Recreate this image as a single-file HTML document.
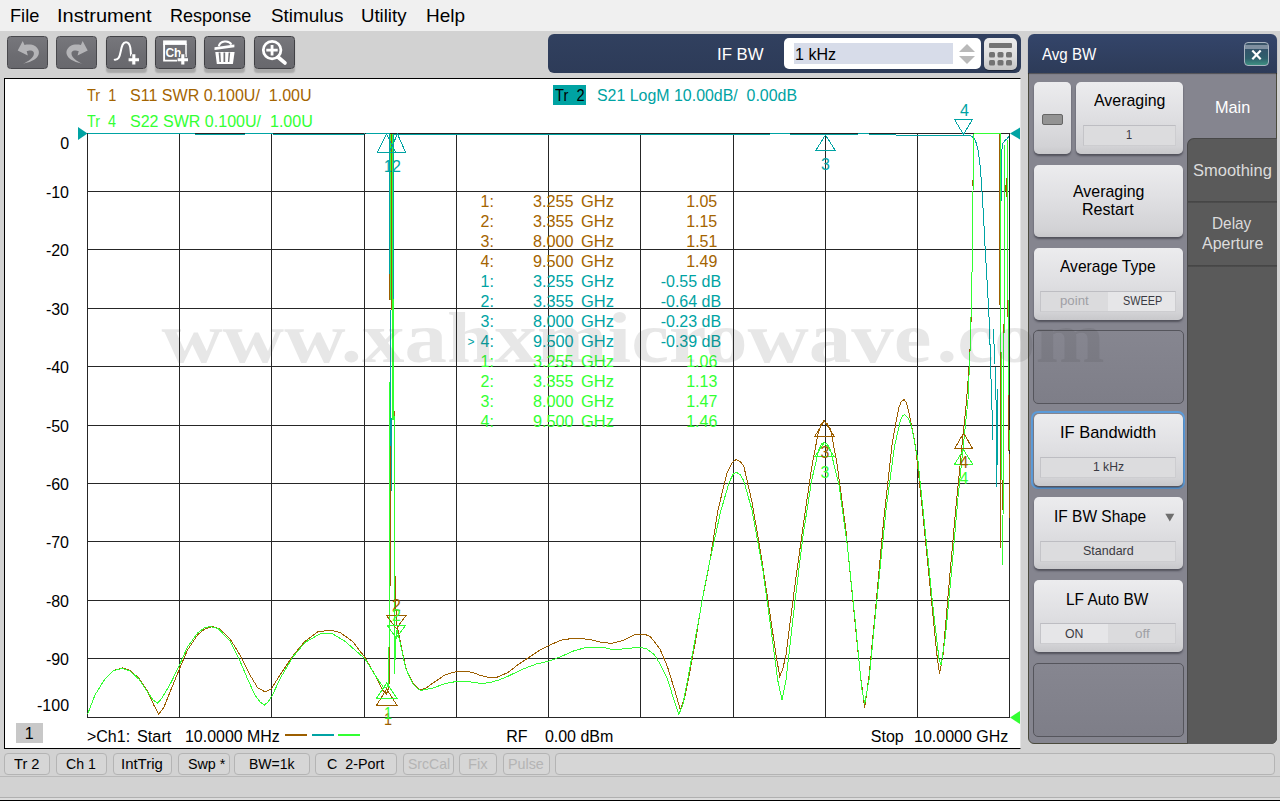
<!DOCTYPE html>
<html><head><meta charset="utf-8"><title>Network Analyzer</title>
<style>
html,body{margin:0;padding:0;}
body{width:1280px;height:801px;overflow:hidden;background:#d2d2d2;font-family:"Liberation Sans",sans-serif;position:relative;}
.abs{position:absolute;}
.t{position:absolute;white-space:pre;line-height:1;}
#menubar{left:0;top:0;width:1280px;height:31px;background:#f0f0f0;}
.tb{position:absolute;top:36px;width:39px;height:31px;border:1px solid #404044;border-radius:3.5px;
 background:linear-gradient(#77777c,#6c6c71 60%,#68686d);box-shadow:0 3.5px 1.5px rgba(0,0,0,0.2);}
.tb.dis{box-shadow:none;border-color:#48484c;}
.tb svg{position:absolute;left:-1px;top:-1px;}
.sk{position:absolute;left:1034px;width:149px;height:72px;border-radius:5px;
 background:linear-gradient(#ececee,#e0e0e3 45%,#d2d2d5 90%,#c8c8cb);box-shadow:0 2px 2px rgba(40,40,50,0.55);}
.slot{position:absolute;left:1033px;width:149px;height:72px;border-radius:5px;border:1px solid #55555c;
 background:linear-gradient(#868690,#7e7e88);}
.vb{position:absolute;left:6px;width:136px;height:20px;background:#dcdcde;border:1px solid #cfcfd2;border-top-color:#c4c4c8;box-sizing:border-box;
 font-size:12px;color:#3c3c44;text-align:center;line-height:19px;}
.sb{position:absolute;top:753px;height:20px;border:1px solid #b4b4b4;border-radius:4px;background:#d6d6d6;}
</style></head><body>
<div id="menubar" class="abs"></div>
<div class="t" style="left:9.51px;top:6.00px;font-size:19px;color:#000;transform-origin:0 0;transform:scaleX(0.9570);">File</div>
<div class="t" style="left:56.65px;top:6.00px;font-size:19px;color:#000;transform-origin:0 0;transform:scaleX(1.0527);">Instrument</div>
<div class="t" style="left:170.12px;top:6.00px;font-size:19px;color:#000;transform-origin:0 0;transform:scaleX(0.9489);">Response</div>
<div class="t" style="left:270.54px;top:6.00px;font-size:19px;color:#000;transform-origin:0 0;transform:scaleX(0.9943);">Stimulus</div>
<div class="t" style="left:361.36px;top:6.00px;font-size:19px;color:#000;transform-origin:0 0;transform:scaleX(0.9791);">Utility</div>
<div class="t" style="left:426.14px;top:6.00px;font-size:19px;color:#000;transform-origin:0 0;transform:scaleX(0.9995);">Help</div>
<div class="tb dis" style="left:7px;"><svg width="41" height="33" viewBox="0 0 41 33"><path d="M10.7 14.4 L15.75 5 L17.5 8.9 C20.5 8.4 25 8 28 10 C31 12 32.6 15 31.6 18.5 C30.5 22.2 26 25.6 16.1 27.7 C22 25 26.3 22 26.9 18 C27.3 15.5 25.5 14.3 23.6 14.4 C22 14.5 20.5 14.8 19.7 15.1 L20.8 19.4 Z" fill="#b4b4b7"/></svg></div>
<div class="tb dis" style="left:56.4px;"><svg width="41" height="33" viewBox="0 0 41 33"><g transform="translate(42.4,0) scale(-1,1)"><path d="M10.7 14.4 L15.75 5 L17.5 8.9 C20.5 8.4 25 8 28 10 C31 12 32.6 15 31.6 18.5 C30.5 22.2 26 25.6 16.1 27.7 C22 25 26.3 22 26.9 18 C27.3 15.5 25.5 14.3 23.6 14.4 C22 14.5 20.5 14.8 19.7 15.1 L20.8 19.4 Z" fill="#b4b4b7"/></g></svg></div>
<div class="tb" style="left:105.8px;"><svg width="41" height="33" viewBox="0 0 41 33"><path d="M8.7 23.7 C12.6 24 13.6 21 14.7 15.5 C15.8 9.5 16.8 6.2 20 6.2 C23 6.2 23.8 9 24.3 11.6 C24.7 14.5 24.8 17 25.1 19.5" fill="none" stroke="#fff" stroke-width="2" stroke-linecap="round"/><path d="M22.6 23.8h10.4M27.8 18.3v10.2" stroke="#727276" stroke-width="5.4"/><path d="M22.6 23.8h10.4M27.8 18.3v10.2" stroke="#fff" stroke-width="3.1"/></svg></div>
<div class="tb" style="left:155.1px;"><svg width="41" height="33" viewBox="0 0 41 33"><rect x="8.1" y="4.4" width="23.6" height="4.5" fill="#fff"/><path d="M9.1 8v16.6h13" fill="none" stroke="#fff" stroke-width="1.9"/><path d="M31 8v15" fill="none" stroke="#fff" stroke-width="1.5"/><text x="10.4" y="21" font-family="Liberation Sans, sans-serif" font-weight="bold" font-size="13" fill="#fff" textLength="16" lengthAdjust="spacingAndGlyphs">Ch</text><path d="M22.6 23.8h10.4M27.8 18.3v10.2" stroke="#727276" stroke-width="5.4"/><path d="M22.6 23.8h10.4M27.8 18.3v10.2" stroke="#fff" stroke-width="3.1"/></svg></div>
<div class="tb" style="left:204.4px;"><svg width="41" height="33" viewBox="0 0 41 33"><path d="M10.5 11.2 L30.4 8.5 L30.4 11.3 L10.5 13.9 Z" fill="#fff"/><path d="M14.8 10.4 C15.8 4.6 25 3.8 27.4 8.6" fill="none" stroke="#fff" stroke-width="2.1"/><path d="M11.3 15.9 L30.6 15.9 L28.9 28 L12.8 28 Z" fill="#fff"/><path d="M14.6 16.6 L16.4 16.6 L16.9 26.1 L15.5 26.1 Z M19.5 16.6 L21.2 16.6 L21.2 26.1 L19.5 26.1 Z M24.6 16.6 L26.2 16.6 L25.3 26.1 L23.9 26.1 Z" fill="#727276"/></svg></div>
<div class="tb" style="left:253.8px;"><svg width="41" height="33" viewBox="0 0 41 33"><circle cx="18.1" cy="14.1" r="8.8" fill="none" stroke="#fff" stroke-width="2.8"/><path d="M24.2 21.2 L30.9 26.9" stroke="#fff" stroke-width="3.8" stroke-linecap="round"/><path d="M12.3 14.1h11.4M18.05 8.9v10.5" stroke="#fff" stroke-width="2.8"/></svg></div>
<div class="abs" style="left:548px;top:34px;width:473px;height:39px;border-radius:6px;background:linear-gradient(#31405f,#2d3b58);"></div>
<div class="t" style="left:717.45px;top:46.00px;font-size:17px;color:#fff;transform-origin:0 0;transform:scaleX(0.9871);">IF BW</div>
<div class="abs" style="left:784px;top:38px;width:197px;height:31px;border-radius:5px;background:#fff;"></div>
<div class="abs" style="left:794px;top:43px;width:159px;height:21px;background:#d7dce9;"></div>
<div class="t" style="left:794.78px;top:46.00px;font-size:17px;color:#000;transform-origin:0 0;transform:scaleX(0.9440);">1 kHz</div>
<svg class="abs" style="left:957px;top:42px" width="20" height="24" viewBox="0 0 20 24"><path d="M2 10 L10 2 L18 10 Z" fill="#b9b9b9"/><path d="M2 14 L10 22 L18 14 Z" fill="#b9b9b9"/></svg>
<div class="abs" style="left:984px;top:38px;width:33px;height:32px;border-radius:5px;background:linear-gradient(#ededed,#dcdcdc 60%,#c4c4c4);box-shadow:0 1px 1px rgba(0,0,0,0.4);"></div>
<svg class="abs" style="left:984px;top:38px" width="33" height="32" viewBox="0 0 33 32"><rect x="5" y="5" width="23" height="5" rx="1" fill="#737373"/><rect x="5.0" y="14" width="6" height="5.5" rx="1.5" fill="#737373"/><rect x="13.5" y="14" width="6" height="5.5" rx="1.5" fill="#737373"/><rect x="22.0" y="14" width="6" height="5.5" rx="1.5" fill="#737373"/><rect x="5.0" y="22" width="6" height="5.5" rx="1.5" fill="#737373"/><rect x="13.5" y="22" width="6" height="5.5" rx="1.5" fill="#737373"/><rect x="22.0" y="22" width="6" height="5.5" rx="1.5" fill="#737373"/></svg>
<div class="abs" style="left:4px;top:78px;width:1015px;height:669px;background:#fff;border-left:1px solid #000;border-top:1px solid #000;border-bottom:1px solid #000;border-right:1px solid #e4e4e4;"></div>
<svg class="abs" style="left:0;top:0" width="1280" height="801" viewBox="0 0 1280 801" shape-rendering="crispEdges">
<path d="M87.5 133 V718 M179.5 133 V718 M271.5 133 V718 M364.5 133 V718 M456.5 133 V718 M548.5 133 V718 M640.5 133 V718 M733.5 133 V718 M825.5 133 V718 M917.5 133 V718 M1009.5 133 V718 M87 133.5 H1010 M87 191.5 H1010 M87 249.5 H1010 M87 308.5 H1010 M87 366.5 H1010 M87 425.5 H1010 M87 483.5 H1010 M87 541.5 H1010 M87 600.5 H1010 M87 658.5 H1010 M87 717.5 H1010" stroke="#262626" stroke-width="1" fill="none"/>
<polyline points="87.5,714.5 95.0,695.0 105.0,678.8 113.8,670.5 122.5,668.0 130.0,670.5 138.8,678.0 147.5,691.3 153.8,705.0 158.8,714.3 163.8,707.5 171.3,688.8 179.5,668.8 187.5,650.0 197.5,635.0 205.0,628.8 212.5,626.5 220.0,628.8 230.0,638.8 240.0,655.0 250.0,675.0 257.5,687.5 265.0,691.8 271.3,688.8 280.0,675.0 292.5,656.3 305.0,641.3 317.5,632.0 330.0,630.0 340.0,632.5 352.5,641.3 365.0,657.5 375.0,675.0 382.5,690.0 386.5,694.0 388.5,688.0 389.1,683.0 389.1,646.0" fill="none" stroke="#9c5e00" stroke-width="1" />
<polyline points="395.5,576.0 395.6,600.0 396.4,622.0 397.4,627.5 400.0,640.0 405.7,667.8 412.8,683.0 418.0,688.5 421.0,690.0 426.0,688.0 433.0,683.0 444.8,675.0 456.7,671.4 466.0,671.0 475.6,673.3 480.0,675.3 487.5,677.2 497.0,677.2 508.0,672.5 517.5,665.0 528.8,657.5 540.0,650.0 551.3,644.4 562.5,639.7 575.6,638.2 588.8,639.3 600.0,642.0 611.3,643.4 622.5,640.6 635.6,634.4 645.0,634.3 650.6,636.9 660.0,649.0 667.5,666.9 675.0,691.3 680.3,710.0 684.4,698.8 690.0,670.6 695.6,640.6 701.3,605.0 709.8,561.3 718.0,510.0 726.7,474.0 732.0,463.0 736.0,459.4 740.0,461.5 743.7,465.8 752.0,502.0 760.7,552.8 771.0,620.7 776.0,655.0 779.8,676.7 783.0,668.0 786.0,654.7 794.7,586.8 803.0,527.0 811.6,468.0 818.0,434.0 821.0,424.5 823.5,421.0 827.0,423.5 830.7,429.7 837.0,463.7 845.6,527.3 854.0,612.0 860.5,676.0 864.7,707.7 869.0,676.0 875.3,612.0 883.8,518.8 892.3,442.4 898.6,408.5 901.0,402.0 904.0,399.5 906.5,403.0 909.0,412.7 915.6,446.7 922.0,506.0 930.5,591.0 936.9,654.7 939.5,674.0 943.0,654.7 949.6,578.0 956.0,506.0 962.3,442.4 966.6,400.0 969.2,365.0 970.5,340.0 972.5,250.0 973.5,134.0" fill="none" stroke="#9c5e00" stroke-width="1" />
<polyline points="999.6,134.0 999.8,305.0" fill="none" stroke="#9c5e00" stroke-width="1" />
<polyline points="1008.6,395.0 1008.6,451.0" fill="none" stroke="#9c5e00" stroke-width="1" />
<polyline points="1009.4,454.0 1009.4,518.0" fill="none" stroke="#9c5e00" stroke-width="1" />
<polyline points="1005.2,185.0 1005.2,191.0" fill="none" stroke="#9c5e00" stroke-width="1" />
<polyline points="1006.6,178.0 1006.6,197.0" fill="none" stroke="#9c5e00" stroke-width="1" />
<polyline points="1000.4,340.0 1000.4,548.0" fill="none" stroke="#9c5e00" stroke-width="1" />
<polyline points="1007.6,276.0 1008.0,317.0" fill="none" stroke="#9c5e00" stroke-width="1" />
<polyline points="1003.4,324.0 1003.4,340.0" fill="none" stroke="#9c5e00" stroke-width="1" />
<polyline points="1002.4,480.0 1002.4,510.0" fill="none" stroke="#9c5e00" stroke-width="1" />
<polyline points="972.5,180.0 972.5,186.0" fill="none" stroke="#9c5e00" stroke-width="1" />
<polyline points="972.5,259.0 972.5,267.0" fill="none" stroke="#9c5e00" stroke-width="1" />
<polyline points="971.5,313.0 971.5,322.0" fill="none" stroke="#9c5e00" stroke-width="1" />
<polyline points="391.5,134.0 391.5,310.0" fill="none" stroke="#9c5e00" stroke-width="1" />
<polyline points="390.5,446.0 390.5,586.0" fill="none" stroke="#9c5e00" stroke-width="1" />
<polyline points="389.6,274.0 389.6,300.0" fill="none" stroke="#9c5e00" stroke-width="1" />
<polyline points="394.5,411.0 394.5,416.0" fill="none" stroke="#9c5e00" stroke-width="1" />
<polyline points="88.0,133.0 194.0,133.0 195.0,134.0 245.0,134.0 246.0,133.0 272.0,133.0 273.0,134.0 364.0,134.0 365.0,133.0 389.5,133.6 389.5,274.0" fill="none" stroke="#00a3a3" stroke-width="1" />
<polyline points="393.4,300.0 393.4,134.0 770.0,134.0 771.0,133.0 789.0,133.0 790.0,134.0 858.0,134.0 859.0,133.0 868.0,133.0 869.0,134.0 895.0,134.0 896.0,135.0 955.0,135.0 965.0,135.3 971.0,136.0 974.0,138.0 976.0,142.5 978.0,150.0 979.5,160.0 980.7,172.5 982.0,192.0 983.3,212.0 985.0,246.0 987.2,282.7 989.3,322.0 990.5,360.0 991.6,400.0 992.4,420.0 993.0,440.0" fill="none" stroke="#00a3a3" stroke-width="1" />
<polyline points="1001.6,201.0 1001.6,160.0 1002.0,149.0 1003.0,143.0 1005.0,140.5 1007.0,139.0 1009.0,136.0" fill="none" stroke="#00a3a3" stroke-width="1" />
<polyline points="993.6,329.0 994.2,350.0 995.0,364.0 995.2,400.0" fill="none" stroke="#00a3a3" stroke-width="1" />
<polyline points="996.0,400.0 996.0,487.0" fill="none" stroke="#00a3a3" stroke-width="1" />
<polyline points="997.6,389.0 997.6,465.0" fill="none" stroke="#00a3a3" stroke-width="1" />
<polyline points="996.8,430.0 996.8,465.0" fill="none" stroke="#00a3a3" stroke-width="1" />
<polyline points="390.5,310.0 390.5,418.0" fill="none" stroke="#00a3a3" stroke-width="1" />
<polyline points="390.5,418.0 390.5,446.0" fill="none" stroke="#00a3a3" stroke-width="1" />
<polyline points="391.4,418.0 391.4,491.0" fill="none" stroke="#00a3a3" stroke-width="1" />
<polyline points="87.5,714.5 95.0,695.0 105.0,678.8 113.8,670.5 122.5,668.5 130.0,671.0 138.8,679.0 147.5,692.0 153.0,700.0 157.5,703.3 162.0,698.0 171.3,682.0 179.5,665.0 187.5,647.0 197.5,633.0 204.0,628.0 210.0,626.5 218.0,628.5 230.0,641.0 240.0,661.0 248.0,680.0 255.0,695.0 260.0,702.0 264.5,705.0 268.0,702.0 272.5,695.0 280.0,678.8 292.5,657.5 305.0,642.5 320.0,633.8 326.0,633.0 332.5,633.8 345.0,641.3 355.0,650.0 365.0,658.8 375.0,675.0 383.8,688.0 387.0,687.0 388.8,683.0 389.3,600.0 389.3,382.0" fill="none" stroke="#33ff33" stroke-width="1" />
<polyline points="394.5,416.0 394.6,673.8 395.6,640.0 397.0,630.0 400.0,642.0 405.7,668.5 412.8,684.0 418.0,689.0 421.0,690.3 426.0,689.5 433.0,688.0 444.8,683.7 456.7,681.4 468.5,681.6 480.4,683.3 489.4,682.8 498.8,680.0 508.0,676.3 521.3,669.7 536.3,664.0 548.4,661.3 558.8,657.5 573.8,650.9 586.9,647.2 601.9,647.2 613.0,649.6 626.3,648.7 639.4,647.2 646.9,649.0 654.4,654.7 660.0,664.0 667.5,679.0 673.0,696.9 678.8,714.0 682.5,706.3 688.0,678.0 693.8,646.3 699.4,616.3 704.0,590.0 709.8,561.3 720.4,512.5 729.0,482.8 733.0,474.5 736.0,472.0 740.0,474.5 743.7,480.6 752.0,510.0 762.8,569.8 771.0,629.0 777.7,680.0 782.0,700.0 786.0,680.0 794.7,603.7 803.0,535.8 811.6,480.6 819.0,448.8 822.0,443.5 824.4,442.4 827.5,444.5 830.7,451.0 839.0,485.0 847.7,548.5 856.0,629.0 861.7,688.6 864.7,703.5 869.0,680.0 877.4,595.0 886.0,510.0 894.4,446.7 900.8,419.0 903.0,415.5 905.0,414.8 908.0,418.0 911.4,425.5 917.8,459.4 924.0,518.8 932.6,603.7 939.0,659.0 941.0,665.0 945.3,637.7 951.7,569.8 958.0,497.6 964.5,434.0 968.0,400.0 970.5,340.0 972.5,250.0 973.5,134.0" fill="none" stroke="#33ff33" stroke-width="1" />
<polyline points="973.5,133.5 1000.8,133.5 1000.8,300.0 1001.2,400.0 1001.6,480.0" fill="none" stroke="#33ff33" stroke-width="1" />
<polyline points="1004.4,145.0 1004.2,300.0 1003.5,430.0 1003.0,518.0 1002.0,519.0 1002.0,565.0" fill="none" stroke="#33ff33" stroke-width="1" />
<polyline points="1007.0,140.0 1007.4,280.0 1008.0,300.0 1008.0,395.0" fill="none" stroke="#33ff33" stroke-width="1" />
<polyline points="1009.4,430.0 1009.4,450.0" fill="none" stroke="#33ff33" stroke-width="1" />
<polyline points="390.5,134.0 390.5,300.0" fill="none" stroke="#33ff33" stroke-width="1" />
<polyline points="392.4,134.0 392.4,299.0" fill="none" stroke="#33ff33" stroke-width="1" />
<polyline points="392.5,299.0 392.5,420.0" fill="none" stroke="#33ff33" stroke-width="1" />
<polyline points="393.4,299.0 393.4,420.0" fill="none" stroke="#33ff33" stroke-width="1" />
<rect x="285" y="734" width="22" height="2" fill="#9c5e00"/><rect x="312" y="734" width="22" height="2" fill="#00a3a3"/><rect x="338" y="734" width="22" height="2" fill="#33ff33"/>
<path d="M78 127 L78 140 L87.5 133.5 Z" fill="#00a3a3" shape-rendering="auto"/>
<path d="M1020 127.5 L1020 139.5 L1010 133.5 Z" fill="#00a3a3" shape-rendering="auto"/>
<path d="M1020 711 L1020 724 L1010 717.5 Z" fill="#33ff33" shape-rendering="auto"/>
<path d="M386.5 134.0 L377.5 152.0 L395.5 152.0 Z" fill="none" stroke="#00a3a3" stroke-width="1"/>
<path d="M397.5 134.0 L389.5 152.0 L405.5 152.0 Z" fill="none" stroke="#00a3a3" stroke-width="1"/>
<path d="M825.5 135.0 L816.0 150.0 L835.0 150.0 Z" fill="none" stroke="#00a3a3" stroke-width="1"/>
<path d="M963.5 134.5 L954.5 119.5 L972.5 119.5 Z" fill="none" stroke="#00a3a3" stroke-width="1"/>
<path d="M386.7 689.0 L376.7 705.0 L396.7 705.0 Z" fill="none" stroke="#9c5e00" stroke-width="1"/>
<path d="M386.7 683.0 L376.7 698.0 L396.7 698.0 Z" fill="none" stroke="#33ff33" stroke-width="1"/>
<path d="M396.3 628.7 L386.8 615.7 L405.8 615.7 Z" fill="none" stroke="#9c5e00" stroke-width="1"/>
<path d="M396.3 638.0 L386.8 625.0 L405.8 625.0 Z" fill="none" stroke="#33ff33" stroke-width="1"/>
<path d="M824.4 421.0 L814.9 436.0 L833.9 436.0 Z" fill="none" stroke="#9c5e00" stroke-width="1"/>
<path d="M824.4 442.4 L814.9 456.4 L833.9 456.4 Z" fill="none" stroke="#33ff33" stroke-width="1"/>
<path d="M963.6 433.0 L954.6 448.6 L972.6 448.6 Z" fill="none" stroke="#9c5e00" stroke-width="1"/>
<path d="M963.6 450.0 L954.6 464.0 L972.6 464.0 Z" fill="none" stroke="#33ff33" stroke-width="1"/>
</svg>
<div class="t" style="left:60.13px;top:136.00px;font-size:16px;color:#000;transform-origin:0 0;transform:scaleX(1.0000);">0</div>
<div class="t" style="left:45.90px;top:185.00px;font-size:16px;color:#000;transform-origin:0 0;transform:scaleX(1.0000);">-10</div>
<div class="t" style="left:45.90px;top:243.00px;font-size:16px;color:#000;transform-origin:0 0;transform:scaleX(1.0000);">-20</div>
<div class="t" style="left:45.90px;top:302.00px;font-size:16px;color:#000;transform-origin:0 0;transform:scaleX(1.0000);">-30</div>
<div class="t" style="left:45.90px;top:360.00px;font-size:16px;color:#000;transform-origin:0 0;transform:scaleX(1.0000);">-40</div>
<div class="t" style="left:45.90px;top:419.00px;font-size:16px;color:#000;transform-origin:0 0;transform:scaleX(1.0000);">-50</div>
<div class="t" style="left:45.90px;top:477.00px;font-size:16px;color:#000;transform-origin:0 0;transform:scaleX(1.0000);">-60</div>
<div class="t" style="left:45.90px;top:535.00px;font-size:16px;color:#000;transform-origin:0 0;transform:scaleX(1.0000);">-70</div>
<div class="t" style="left:45.90px;top:594.00px;font-size:16px;color:#000;transform-origin:0 0;transform:scaleX(1.0000);">-80</div>
<div class="t" style="left:45.90px;top:652.00px;font-size:16px;color:#000;transform-origin:0 0;transform:scaleX(1.0000);">-90</div>
<div class="t" style="left:37.00px;top:698.00px;font-size:16px;color:#000;transform-origin:0 0;transform:scaleX(1.0000);">-100</div>
<div class="t" style="left:87.27px;top:88.00px;font-size:16px;color:#a46400;transform-origin:0 0;transform:scaleX(0.9071);">Tr  1</div>
<div class="t" style="left:130.47px;top:88.00px;font-size:16px;color:#a46400;transform-origin:0 0;transform:scaleX(1.0025);">S11 SWR 0.100U/  1.00U</div>
<div class="t" style="left:87.28px;top:114.00px;font-size:16px;color:#33ff33;transform-origin:0 0;transform:scaleX(0.8982);">Tr  4</div>
<div class="t" style="left:130.47px;top:114.00px;font-size:16px;color:#33ff33;transform-origin:0 0;transform:scaleX(1.0025);">S22 SWR 0.100U/  1.00U</div>
<div class="abs" style="left:553px;top:85px;width:33px;height:20px;background:#00a3a3;"></div>
<div class="t" style="left:554.67px;top:88.00px;font-size:16px;color:#000;transform-origin:0 0;transform:scaleX(0.9141);">Tr  2</div>
<div class="t" style="left:596.78px;top:88.00px;font-size:16px;color:#00a3a3;transform-origin:0 0;transform:scaleX(0.9951);">S21 LogM 10.00dB/  0.00dB</div>
<div class="t" style="left:480.52px;top:194.00px;font-size:16px;color:#a46400;transform-origin:0 0;transform:scaleX(1.0000);">1:</div>
<div class="t" style="left:532.74px;top:194.00px;font-size:16px;color:#a46400;transform-origin:0 0;transform:scaleX(1.0150);">3.255</div>
<div class="t" style="left:580.57px;top:194.00px;font-size:16px;color:#a46400;transform-origin:0 0;transform:scaleX(1.0300);">GHz</div>
<div class="t" style="left:686.13px;top:194.00px;font-size:16px;color:#a46400;transform-origin:0 0;transform:scaleX(1.0000);">1.05</div>
<div class="t" style="left:480.52px;top:214.00px;font-size:16px;color:#a46400;transform-origin:0 0;transform:scaleX(1.0000);">2:</div>
<div class="t" style="left:532.74px;top:214.00px;font-size:16px;color:#a46400;transform-origin:0 0;transform:scaleX(1.0150);">3.355</div>
<div class="t" style="left:580.57px;top:214.00px;font-size:16px;color:#a46400;transform-origin:0 0;transform:scaleX(1.0300);">GHz</div>
<div class="t" style="left:686.13px;top:214.00px;font-size:16px;color:#a46400;transform-origin:0 0;transform:scaleX(1.0000);">1.15</div>
<div class="t" style="left:480.52px;top:234.00px;font-size:16px;color:#a46400;transform-origin:0 0;transform:scaleX(1.0000);">3:</div>
<div class="t" style="left:532.69px;top:234.00px;font-size:16px;color:#a46400;transform-origin:0 0;transform:scaleX(1.0150);">8.000</div>
<div class="t" style="left:580.57px;top:234.00px;font-size:16px;color:#a46400;transform-origin:0 0;transform:scaleX(1.0300);">GHz</div>
<div class="t" style="left:686.24px;top:234.00px;font-size:16px;color:#a46400;transform-origin:0 0;transform:scaleX(1.0000);">1.51</div>
<div class="t" style="left:480.52px;top:254.00px;font-size:16px;color:#a46400;transform-origin:0 0;transform:scaleX(1.0000);">4:</div>
<div class="t" style="left:532.69px;top:254.00px;font-size:16px;color:#a46400;transform-origin:0 0;transform:scaleX(1.0150);">9.500</div>
<div class="t" style="left:580.57px;top:254.00px;font-size:16px;color:#a46400;transform-origin:0 0;transform:scaleX(1.0300);">GHz</div>
<div class="t" style="left:686.22px;top:254.00px;font-size:16px;color:#a46400;transform-origin:0 0;transform:scaleX(1.0000);">1.49</div>
<div class="t" style="left:480.52px;top:274.00px;font-size:16px;color:#00a3a3;transform-origin:0 0;transform:scaleX(1.0000);">1:</div>
<div class="t" style="left:532.74px;top:274.00px;font-size:16px;color:#00a3a3;transform-origin:0 0;transform:scaleX(1.0150);">3.255</div>
<div class="t" style="left:580.57px;top:274.00px;font-size:16px;color:#00a3a3;transform-origin:0 0;transform:scaleX(1.0300);">GHz</div>
<div class="t" style="left:660.66px;top:274.00px;font-size:16px;color:#00a3a3;transform-origin:0 0;transform:scaleX(1.0000);">-0.55 dB</div>
<div class="t" style="left:480.52px;top:294.00px;font-size:16px;color:#00a3a3;transform-origin:0 0;transform:scaleX(1.0000);">2:</div>
<div class="t" style="left:532.74px;top:294.00px;font-size:16px;color:#00a3a3;transform-origin:0 0;transform:scaleX(1.0150);">3.355</div>
<div class="t" style="left:580.57px;top:294.00px;font-size:16px;color:#00a3a3;transform-origin:0 0;transform:scaleX(1.0300);">GHz</div>
<div class="t" style="left:660.66px;top:294.00px;font-size:16px;color:#00a3a3;transform-origin:0 0;transform:scaleX(1.0000);">-0.64 dB</div>
<div class="t" style="left:480.52px;top:314.00px;font-size:16px;color:#00a3a3;transform-origin:0 0;transform:scaleX(1.0000);">3:</div>
<div class="t" style="left:532.69px;top:314.00px;font-size:16px;color:#00a3a3;transform-origin:0 0;transform:scaleX(1.0150);">8.000</div>
<div class="t" style="left:580.57px;top:314.00px;font-size:16px;color:#00a3a3;transform-origin:0 0;transform:scaleX(1.0300);">GHz</div>
<div class="t" style="left:660.66px;top:314.00px;font-size:16px;color:#00a3a3;transform-origin:0 0;transform:scaleX(1.0000);">-0.23 dB</div>
<div class="t" style="left:480.52px;top:334.00px;font-size:16px;color:#00a3a3;transform-origin:0 0;transform:scaleX(1.0000);">4:</div>
<div class="t" style="left:532.69px;top:334.00px;font-size:16px;color:#00a3a3;transform-origin:0 0;transform:scaleX(1.0150);">9.500</div>
<div class="t" style="left:580.57px;top:334.00px;font-size:16px;color:#00a3a3;transform-origin:0 0;transform:scaleX(1.0300);">GHz</div>
<div class="t" style="left:660.66px;top:334.00px;font-size:16px;color:#00a3a3;transform-origin:0 0;transform:scaleX(1.0000);">-0.39 dB</div>
<div class="t" style="left:480.52px;top:354.00px;font-size:16px;color:#33ff33;transform-origin:0 0;transform:scaleX(1.0000);">1:</div>
<div class="t" style="left:532.74px;top:354.00px;font-size:16px;color:#33ff33;transform-origin:0 0;transform:scaleX(1.0150);">3.255</div>
<div class="t" style="left:580.57px;top:354.00px;font-size:16px;color:#33ff33;transform-origin:0 0;transform:scaleX(1.0300);">GHz</div>
<div class="t" style="left:686.16px;top:354.00px;font-size:16px;color:#33ff33;transform-origin:0 0;transform:scaleX(1.0000);">1.06</div>
<div class="t" style="left:480.52px;top:374.00px;font-size:16px;color:#33ff33;transform-origin:0 0;transform:scaleX(1.0000);">2:</div>
<div class="t" style="left:532.74px;top:374.00px;font-size:16px;color:#33ff33;transform-origin:0 0;transform:scaleX(1.0150);">3.355</div>
<div class="t" style="left:580.57px;top:374.00px;font-size:16px;color:#33ff33;transform-origin:0 0;transform:scaleX(1.0300);">GHz</div>
<div class="t" style="left:686.16px;top:374.00px;font-size:16px;color:#33ff33;transform-origin:0 0;transform:scaleX(1.0000);">1.13</div>
<div class="t" style="left:480.52px;top:394.00px;font-size:16px;color:#33ff33;transform-origin:0 0;transform:scaleX(1.0000);">3:</div>
<div class="t" style="left:532.69px;top:394.00px;font-size:16px;color:#33ff33;transform-origin:0 0;transform:scaleX(1.0150);">8.000</div>
<div class="t" style="left:580.57px;top:394.00px;font-size:16px;color:#33ff33;transform-origin:0 0;transform:scaleX(1.0300);">GHz</div>
<div class="t" style="left:686.26px;top:394.00px;font-size:16px;color:#33ff33;transform-origin:0 0;transform:scaleX(1.0000);">1.47</div>
<div class="t" style="left:480.52px;top:414.00px;font-size:16px;color:#33ff33;transform-origin:0 0;transform:scaleX(1.0000);">4:</div>
<div class="t" style="left:532.69px;top:414.00px;font-size:16px;color:#33ff33;transform-origin:0 0;transform:scaleX(1.0150);">9.500</div>
<div class="t" style="left:580.57px;top:414.00px;font-size:16px;color:#33ff33;transform-origin:0 0;transform:scaleX(1.0300);">GHz</div>
<div class="t" style="left:686.16px;top:414.00px;font-size:16px;color:#33ff33;transform-origin:0 0;transform:scaleX(1.0000);">1.46</div>
<div class="t" style="left:467.58px;top:336.00px;font-size:12px;color:#00a3a3;transform-origin:0 0;transform:scaleX(1.0000);">&gt;</div>
<div class="t" style="left:383.80px;top:159.00px;font-size:16px;color:#00a3a3;transform-origin:0 0;transform:scaleX(0.9000);">1</div>
<div class="t" style="left:392.05px;top:159.00px;font-size:16px;color:#00a3a3;transform-origin:0 0;transform:scaleX(1.0000);">2</div>
<div class="t" style="left:821.10px;top:157.00px;font-size:16px;color:#00a3a3;transform-origin:0 0;transform:scaleX(1.0000);">3</div>
<div class="t" style="left:960.10px;top:103.00px;font-size:16px;color:#00a3a3;transform-origin:0 0;transform:scaleX(1.0000);">4</div>
<div class="t" style="left:383.80px;top:712.00px;font-size:16px;color:#9c5e00;transform-origin:0 0;transform:scaleX(0.9000);">1</div>
<div class="t" style="left:383.80px;top:706.00px;font-size:16px;color:#33ff33;transform-origin:0 0;transform:scaleX(0.9000);">1</div>
<div class="t" style="left:392.05px;top:598.00px;font-size:16px;color:#9c5e00;transform-origin:0 0;transform:scaleX(1.0000);">2</div>
<div class="t" style="left:392.05px;top:608.00px;font-size:16px;color:#33ff33;transform-origin:0 0;transform:scaleX(1.0000);">2</div>
<div class="t" style="left:820.60px;top:445.00px;font-size:16px;color:#9c5e00;transform-origin:0 0;transform:scaleX(1.0000);">3</div>
<div class="t" style="left:820.60px;top:465.00px;font-size:16px;color:#33ff33;transform-origin:0 0;transform:scaleX(1.0000);">3</div>
<div class="t" style="left:959.60px;top:455.00px;font-size:16px;color:#9c5e00;transform-origin:0 0;transform:scaleX(1.0000);">4</div>
<div class="t" style="left:959.60px;top:471.00px;font-size:16px;color:#33ff33;transform-origin:0 0;transform:scaleX(1.0000);">4</div>
<div class="abs" style="left:16px;top:723px;width:27px;height:20px;background:#c8c8c8;"></div>
<div class="t" style="left:24.83px;top:726.00px;font-size:16px;color:#000;transform-origin:0 0;transform:scaleX(1.0000);">1</div>
<div class="t" style="left:86.94px;top:729.00px;font-size:16px;color:#000;transform-origin:0 0;transform:scaleX(1.0000);">&gt;Ch1:</div>
<div class="t" style="left:136.76px;top:729.00px;font-size:16px;color:#000;transform-origin:0 0;transform:scaleX(1.0168);">Start</div>
<div class="t" style="left:184.79px;top:729.00px;font-size:16px;color:#000;transform-origin:0 0;transform:scaleX(0.9963);">10.0000 MHz</div>
<div class="t" style="left:506.19px;top:729.00px;font-size:16px;color:#000;transform-origin:0 0;transform:scaleX(1.0000);">RF</div>
<div class="t" style="left:544.88px;top:729.00px;font-size:16px;color:#000;transform-origin:0 0;transform:scaleX(1.0000);">0.00 dBm</div>
<div class="t" style="left:870.77px;top:729.00px;font-size:16px;color:#000;transform-origin:0 0;transform:scaleX(1.0000);">Stop</div>
<div class="t" style="left:914.02px;top:729.00px;font-size:16px;color:#000;transform-origin:0 0;transform:scaleX(1.0000);">10.0000 GHz</div>
<div class="abs" style="left:1028px;top:60px;width:249px;height:684px;border-radius:0 0 6px 6px;background:#85858f;border:1px solid #4a4a3c;box-sizing:border-box;"></div>
<div class="abs" style="left:1187px;top:138px;width:90px;height:606px;border-radius:7px 0 6px 0;background:#5a5a5a;border-left:1px solid #484848;border-top:1px solid #484848;box-sizing:border-box;"></div>
<div class="abs" style="left:1188px;top:201px;width:89px;height:2px;background:linear-gradient(#434343,#4e4e4e);"></div>
<div class="abs" style="left:1188px;top:265px;width:89px;height:2px;background:linear-gradient(#434343,#4e4e4e);"></div>
<div class="abs" style="left:1028px;top:34px;width:249px;height:39px;border-radius:6px 6px 0 0;background:linear-gradient(#34456a,#2d3b58);box-shadow:0 1px 1px rgba(0,0,0,0.4);"></div>
<div class="t" style="left:1042.47px;top:46.00px;font-size:17px;color:#fff;transform-origin:0 0;transform:scaleX(0.8889);">Avg BW</div>
<div class="abs" style="left:1244px;top:42px;width:23px;height:22px;border:1px solid #aab4c0;border-radius:4px;background:linear-gradient(#3a5468 0,#3a5468 9%,#7f8fa0 10%,#7f8fa0 27%,#33536a 29%,#2f5f6c 70%,#3f9082);"></div>
<svg class="abs" style="left:1244px;top:42px" width="25" height="24" viewBox="0 0 25 24"><path d="M8.3 8.6 L16.7 17.2 M16.7 8.6 L8.3 17.2" stroke="#fff" stroke-width="2.2"/></svg>
<div class="t" style="left:1215.16px;top:99.00px;font-size:17px;color:#fff;transform-origin:0 0;transform:scaleX(0.9578);">Main</div>
<div class="t" style="left:1193.25px;top:162.00px;font-size:17px;color:#dcdcdc;transform-origin:0 0;transform:scaleX(0.9697);">Smoothing</div>
<div class="t" style="left:1212.34px;top:215.00px;font-size:17px;color:#dcdcdc;transform-origin:0 0;transform:scaleX(0.9040);">Delay</div>
<div class="t" style="left:1202.37px;top:235.00px;font-size:17px;color:#dcdcdc;transform-origin:0 0;transform:scaleX(0.9408);">Aperture</div>
<div class="sk" style="left:1034px;top:82px;width:37px;"><div class="abs" style="left:8px;top:32px;width:19px;height:9px;border:1px solid #666;border-radius:2px;background:#939393;"></div></div>
<div class="sk" style="left:1076px;top:82px;width:107px;"></div>
<div class="t" style="left:1094.37px;top:92.00px;font-size:17px;color:#000;transform-origin:0 0;transform:scaleX(0.9361);">Averaging</div>
<div class="abs" style="left:1083px;top:125px;width:93px;height:21px;box-sizing:border-box;background:#dcdcde;border:1px solid #cdcdd0;border-top-color:#bdbdc2;border-left-color:#c4c4c8;"></div>
<div class="t" style="left:1126.28px;top:128.00px;font-size:13px;color:#3a3a42;transform-origin:0 0;transform:scaleX(0.8500);">1</div>
<div class="sk" style="left:1034px;top:165px;width:149px;"></div>
<div class="t" style="left:1073.37px;top:183.00px;font-size:17px;color:#000;transform-origin:0 0;transform:scaleX(0.9361);">Averaging</div>
<div class="t" style="left:1082.18px;top:201.00px;font-size:17px;color:#000;transform-origin:0 0;transform:scaleX(0.9442);">Restart</div>
<div class="sk" style="left:1034px;top:248px;width:149px;"></div>
<div class="t" style="left:1059.97px;top:258.00px;font-size:17px;color:#000;transform-origin:0 0;transform:scaleX(0.9167);">Average Type</div>
<div class="abs" style="left:1040px;top:291px;width:136px;height:21px;box-sizing:border-box;background:linear-gradient(90deg,#dbdbdd 50%,#e6e6e8 50%);border:1px solid #cdcdd0;border-top-color:#bdbdc2;border-left-color:#c4c4c8;"></div>
<div class="t" style="left:1060.45px;top:294.00px;font-size:13px;color:#a0a0a5;transform-origin:0 0;transform:scaleX(1.0163);">point</div>
<div class="t" style="left:1122.51px;top:294.00px;font-size:13px;color:#3a3a42;transform-origin:0 0;transform:scaleX(0.8385);">SWEEP</div>
<div class="slot" style="top:330px;"></div>
<div class="abs" style="left:1031px;top:411px;width:150px;height:74px;border:2px solid #5b9bd9;border-radius:7px;"></div><div class="sk" style="left:1034px;top:414px;width:149px;"></div>
<div class="t" style="left:1059.98px;top:424.00px;font-size:17px;color:#000;transform-origin:0 0;transform:scaleX(0.9684);">IF Bandwidth</div>
<div class="abs" style="left:1040px;top:457px;width:136px;height:21px;box-sizing:border-box;background:#dcdcde;border:1px solid #cdcdd0;border-top-color:#bdbdc2;border-left-color:#c4c4c8;"></div>
<div class="t" style="left:1092.58px;top:460.00px;font-size:13px;color:#3a3a42;transform-origin:0 0;transform:scaleX(0.9338);">1 kHz</div>
<div class="sk" style="left:1034px;top:497px;width:149px;"></div>
<div class="t" style="left:1053.57px;top:508.00px;font-size:17px;color:#000;transform-origin:0 0;transform:scaleX(0.9112);">IF BW Shape</div>
<svg class="abs" style="left:1165px;top:513px" width="10" height="9"><path d="M0.3 0.8 L9.3 0.8 L4.8 8.4 Z" fill="#6e6e6e"/></svg>
<div class="abs" style="left:1040px;top:541px;width:136px;height:21px;box-sizing:border-box;background:#dcdcde;border:1px solid #cdcdd0;border-top-color:#bdbdc2;border-left-color:#c4c4c8;"></div>
<div class="t" style="left:1083.43px;top:544.00px;font-size:13px;color:#3a3a42;transform-origin:0 0;transform:scaleX(0.9604);">Standard</div>
<div class="sk" style="left:1034px;top:580px;width:149px;"></div>
<div class="t" style="left:1066.14px;top:591.00px;font-size:17px;color:#000;transform-origin:0 0;transform:scaleX(0.9070);">LF Auto BW</div>
<div class="abs" style="left:1040px;top:623px;width:136px;height:21px;box-sizing:border-box;background:linear-gradient(90deg,#e6e6e8 50%,#dbdbdd 50%);border:1px solid #cdcdd0;border-top-color:#bdbdc2;border-left-color:#c4c4c8;"></div>
<div class="t" style="left:1065.42px;top:627.00px;font-size:13px;color:#3a3a42;transform-origin:0 0;transform:scaleX(0.9425);">ON</div>
<div class="t" style="left:1134.93px;top:627.00px;font-size:13px;color:#a0a0a5;transform-origin:0 0;transform:scaleX(1.0412);">off</div>
<div class="slot" style="top:663px;"></div>
<div class="sb" style="left:4px;width:44px;"></div>
<div class="t" style="left:14.07px;top:756.00px;font-size:15px;color:#000;transform-origin:0 0;transform:scaleX(0.9775);">Tr 2</div>
<div class="sb" style="left:56px;width:49px;"></div>
<div class="t" style="left:66.48px;top:756.00px;font-size:15px;color:#000;transform-origin:0 0;transform:scaleX(0.9407);">Ch 1</div>
<div class="sb" style="left:113px;width:57px;"></div>
<div class="t" style="left:121.12px;top:756.00px;font-size:15px;color:#000;transform-origin:0 0;transform:scaleX(0.9960);">IntTrig</div>
<div class="sb" style="left:178px;width:50px;"></div>
<div class="t" style="left:188.35px;top:756.00px;font-size:15px;color:#000;transform-origin:0 0;transform:scaleX(0.9538);">Swp *</div>
<div class="sb" style="left:234px;width:74px;"></div>
<div class="t" style="left:249.35px;top:756.00px;font-size:15px;color:#000;transform-origin:0 0;transform:scaleX(0.9357);">BW=1k</div>
<div class="sb" style="left:315px;width:80px;"></div>
<div class="t" style="left:327.27px;top:756.00px;font-size:15px;color:#000;transform-origin:0 0;transform:scaleX(0.9536);">C  2-Port</div>
<div class="sb" style="left:403px;width:49px;"></div>
<div class="t" style="left:407.66px;top:756.00px;font-size:15px;color:#b4b4b4;transform-origin:0 0;transform:scaleX(0.9348);">SrcCal</div>
<div class="sb" style="left:459px;width:36px;"></div>
<div class="t" style="left:467.99px;top:756.00px;font-size:15px;color:#b4b4b4;transform-origin:0 0;transform:scaleX(0.9837);">Fix</div>
<div class="sb" style="left:503px;width:45px;"></div>
<div class="t" style="left:508.13px;top:756.00px;font-size:15px;color:#b4b4b4;transform-origin:0 0;transform:scaleX(0.9544);">Pulse</div>
<div class="sb" style="left:555px;width:718px;"></div>
<div class="abs" style="left:0;top:776px;width:1280px;height:1px;background:#b9b9b9;"></div>
<div class="abs" style="left:0;top:797px;width:1280px;height:1px;background:#b0b0b0;"></div>
<div class="abs" style="left:0;top:798px;width:1280px;height:2px;background:#dcdcdc;"></div>
<div class="abs" style="left:0;top:800px;width:1280px;height:1px;background:#000;"></div>
<svg class="abs" style="left:0;top:0;pointer-events:none" width="1280" height="801" viewBox="0 0 1280 801"><text x="161.5" y="361.5" font-family="Liberation Serif, serif" font-weight="bold" font-size="72" fill="rgba(60,60,60,0.125)" lengthAdjust="spacingAndGlyphs" textLength="770">www.xahxmicrowave</text><text x="936.5" y="361.5" font-family="Liberation Serif, serif" font-weight="bold" font-size="72" fill="rgba(60,60,60,0.125)" lengthAdjust="spacingAndGlyphs" textLength="168">.com</text></svg>
</body></html>
